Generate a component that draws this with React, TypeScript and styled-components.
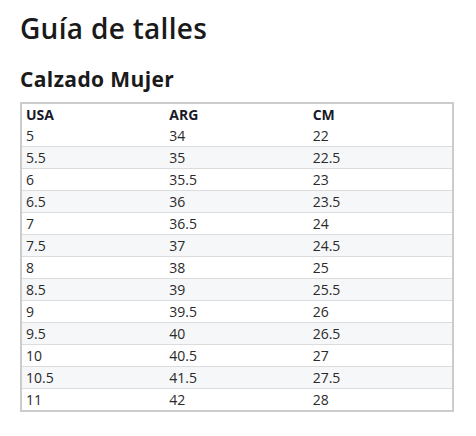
import React from "react";
import styled, { createGlobalStyle } from "styled-components";

const Global = createGlobalStyle`
  html, body { margin: 0; padding: 0; background: #fff; }
  body { font-family: "Open Sans", "Noto Sans", sans-serif; color: #1d1d1f; }
`;

const Page = styled.div`
  padding: 9px 22px 0 20px;
`;

const Title = styled.h1`
  margin: 0;
  font-size: 28px;
  font-weight: 600;
  line-height: 38px;
  letter-spacing: 0.3px;
  color: #1a1a1a;
`;

const Subtitle = styled.h2`
  margin: 19px 0 0;
  font-size: 21px;
  font-weight: 700;
  line-height: 26px;
  letter-spacing: 0.4px;
  color: #1a1a1a;
`;

const Table = styled.table`
  margin-top: 10px;
  width: 434px;
  border-collapse: separate;
  border-spacing: 0;
  border: 2px solid #cccccc;
  font-size: 14px;
`;

const Row = styled.tr<{ $striped?: boolean }>`
  background: ${(p) => (p.$striped ? "#f6f7f8" : "#fff")};
  &:last-child > * { border-bottom: none; }
`;

const Th = styled.th`
  height: 21px;
  text-align: left;
  font-weight: 700;
  padding: 0 4px;
  width: 33.33%;
  color: #1a1a2a;
  line-height: 21px;
  border-bottom: 1px solid #dcdcdc;
`;

const Td = styled.td`
  height: 21px;
  padding: 0 4px;
  color: #2a2a2a;
  line-height: 21px;
  border-bottom: 1px solid #dcdcdc;
`;

const data: [string, string, string][] = [
  ["5", "34", "22"],
  ["5.5", "35", "22.5"],
  ["6", "35.5", "23"],
  ["6.5", "36", "23.5"],
  ["7", "36.5", "24"],
  ["7.5", "37", "24.5"],
  ["8", "38", "25"],
  ["8.5", "39", "25.5"],
  ["9", "39.5", "26"],
  ["9.5", "40", "26.5"],
  ["10", "40.5", "27"],
  ["10.5", "41.5", "27.5"],
  ["11", "42", "28"],
];

export default function App() {
  return (
    <Page>
      <Global />
      <Title>Guía de talles</Title>
      <Subtitle>Calzado Mujer</Subtitle>
      <Table>
        <thead>
          <Row>
            <Th>USA</Th>
            <Th>ARG</Th>
            <Th>CM</Th>
          </Row>
        </thead>
        <tbody>
          {data.map((r, i) => (
            <Row key={i} $striped={i % 2 === 1}>
              <Td>{r[0]}</Td>
              <Td>{r[1]}</Td>
              <Td>{r[2]}</Td>
            </Row>
          ))}
        </tbody>
      </Table>
    </Page>
  );
}
